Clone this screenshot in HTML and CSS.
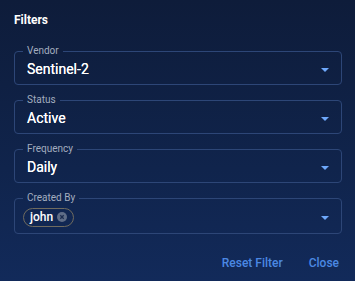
FILE: index.html
```html
<!DOCTYPE html>
<html>
<head>
<meta charset="utf-8">
<link rel="stylesheet" href="styles.css">
</head>
<body>
<div class="dialog">
  <div class="title">Filters</div>
  <div class="fields">
    <fieldset class="field">
      <legend>Vendor</legend>
      <div class="row"><span class="value">Sentinel-2</span><span class="arrow"></span></div>
    </fieldset>
    <fieldset class="field">
      <legend>Status</legend>
      <div class="row"><span class="value">Active</span><span class="arrow"></span></div>
    </fieldset>
    <fieldset class="field">
      <legend>Frequency</legend>
      <div class="row"><span class="value">Daily</span><span class="arrow"></span></div>
    </fieldset>
    <fieldset class="field">
      <legend>Created By</legend>
      <div class="row row-chips">
        <span class="chip">john<svg class="chip-x" width="10" height="10" viewBox="0 0 10 10"><circle cx="5" cy="5" r="5" fill="#5f6d87"/><path d="M3.3 3.3 L6.7 6.7 M6.7 3.3 L3.3 6.7" stroke="#1b2c4f" stroke-width="1.3"/></svg></span>
        <span class="arrow"></span>
      </div>
    </fieldset>
  </div>
  <div class="actions">
    <span class="btn">Reset Filter</span>
    <span class="btn">Close</span>
  </div>
</div>
</body>
</html>
```

FILE: styles.css
```css
html, body {
  margin: 0;
  padding: 0;
  height: 100%;
}
body {
  background: linear-gradient(180deg, #0e1c3a 0%, #10244c 60%, #122a5a 100%);
  font-family: Roboto, "Liberation Sans", sans-serif;
  color: #ffffff;
}
.dialog {
  padding: 12px 13px 0 14px;
}
.title {
  font-size: 12px;
  font-weight: 700;
  line-height: 16px;
}
.fields {
  margin-top: 17px;
  display: flex;
  flex-direction: column;
  gap: 9px;
}
.field {
  margin: 0;
  padding: 0 12px 0 8px;
  border: 1px solid #2d4677;
  border-radius: 4px;
  min-width: 0;
}
.field legend {
  font-size: 10px;
  line-height: 12px;
  padding: 0 4px;
  color: #a3adbf;
}
.row {
  display: flex;
  align-items: center;
  justify-content: space-between;
  height: 27px;
  padding: 0 0 0 4px;
}
.row-chips {
  height: 29px;
  padding-left: 0;
}
.value {
  font-size: 14px;
  font-weight: 400;
  line-height: 16px;
  margin-top: -4px;
  text-shadow: 0 0 0.4px #ffffff;
}
.arrow {
  width: 0;
  height: 0;
  border-left: 4px solid transparent;
  border-right: 4px solid transparent;
  border-top: 4px solid #6ea8fb;
  margin-top: -2px;
}
.chip {
  display: inline-flex;
  align-items: center;
  gap: 4px;
  height: 17px;
  padding: 0 6px 0 6px;
  border: 1px solid #6f6b5f;
  border-radius: 10px;
  font-size: 12px;
  font-weight: 500;
  margin-top: -3px;
}
.chip-x {
  display: block;
}
.actions {
  display: flex;
  justify-content: flex-end;
  gap: 26px;
  margin-top: 22px;
  padding-right: 3px;
}
.btn {
  font-size: 12px;
  font-weight: 500;
  color: #4b88e3;
  line-height: 14px;
}
```
